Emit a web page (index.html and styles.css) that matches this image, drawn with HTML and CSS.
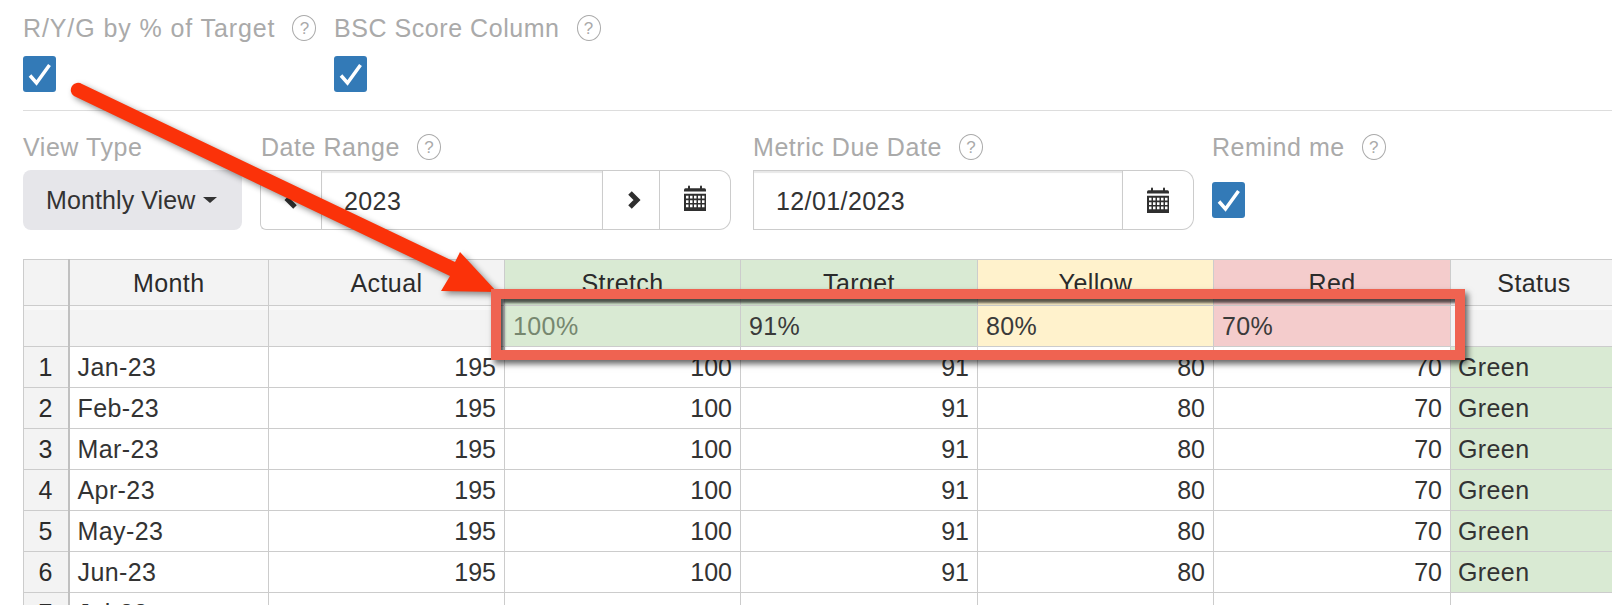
FILE: index.html
```html
<!DOCTYPE html>
<html lang="en">
<head>
<meta charset="utf-8">
<title>Metric settings</title>
<link rel="stylesheet" href="styles.css">
</head>
<body>
<svg class="defs" width="0" height="0" aria-hidden="true">
  <symbol id="cal" viewBox="0 2 22 24" preserveAspectRatio="none">
    <path d="M0 8V6.500Q0 5 1.500 5H4V3.500Q4 2.500 5 2.500T6 3.500V5H16V3.500Q16 2.500 17 2.500T18 3.500V5H20.500Q22 5 22 6.500V8Z" fill="#2f2f2f"/>
    <path fill-rule="evenodd" fill="#2f2f2f" d="M0 10H22V26H0ZM2 12V14.500H4.500V12ZM6 12V14.500H8.500V12ZM10 12V14.500H12.500V12ZM14 12V14.500H16.500V12ZM18 12V14.500H20.500V12ZM2 16V18.500H4.500V16ZM6 16V18.500H8.500V16ZM10 16V18.500H12.500V16ZM14 16V18.500H16.500V16ZM18 16V18.500H20.500V16ZM2 20V22.500H4.500V20ZM6 20V22.500H8.500V20ZM10 20V22.500H12.500V20ZM14 20V22.500H16.500V20ZM18 20V22.500H20.500V20Z"/>
  </symbol>
  <symbol id="tick" viewBox="0 0 33 36">
    <path d="M7 19.500L13.500 27L26.500 9" fill="none" stroke="#fff" stroke-width="3.500"/>
  </symbol>
</svg>

<div class="page">
  <div class="settings">
    <div class="field f-ryg">
      <div class="label">R/Y/G by % of Target <span class="help">?</span></div>
      <span class="check"><svg class="tick"><use href="#tick"/></svg></span>
    </div>
    <div class="field">
      <div class="label">BSC Score Column <span class="help">?</span></div>
      <span class="check"><svg class="tick"><use href="#tick"/></svg></span>
    </div>
  </div>

  <hr class="rule">

  <div class="controls">
    <div class="field f-view">
      <div class="label">View Type</div>
      <button class="dropdown">Monthly View <span class="caret"></span></button>
    </div>
    <div class="field f-range">
      <div class="label">Date Range <span class="help">?</span></div>
      <div class="group">
        <span class="addon a-prev"><svg class="chev" viewBox="0 0 14 18"><path d="M11 2L4 9L11 16" fill="none" stroke="#2f2f2f" stroke-width="5"/></svg></span>
        <span class="input i-year">2023</span>
        <span class="addon a-next"><svg class="chev" viewBox="0 0 14 18"><path d="M3 2L10 9L3 16" fill="none" stroke="#2f2f2f" stroke-width="5"/></svg></span>
        <span class="addon a-cal a-cal-high"><svg class="cal"><use href="#cal"/></svg></span>
      </div>
    </div>
    <div class="field f-due">
      <div class="label">Metric Due Date <span class="help">?</span></div>
      <div class="group">
        <span class="input i-date">12/01/2023</span>
        <span class="addon a-cal"><svg class="cal"><use href="#cal"/></svg></span>
      </div>
    </div>
    <div class="field">
      <div class="label">Remind me <span class="help">?</span></div>
      <div class="remind"><span class="check"><svg class="tick"><use href="#tick"/></svg></span></div>
    </div>
  </div>

  <div class="sheet">
    <table>
      <colgroup>
        <col class="c-idx"><col class="c-month"><col class="c-actual"><col class="c-stretch"><col class="c-target"><col class="c-yellow"><col class="c-red"><col class="c-status">
      </colgroup>
      <thead>
        <tr class="head">
          <th class="idx"></th><th>Month</th><th>Actual</th><th class="green">Stretch</th><th class="green">Target</th><th class="yellow">Yellow</th><th class="red">Red</th><th>Status</th>
        </tr>
        <tr class="pct">
          <th class="idx"></th><th></th><th></th><th class="green muted">100%</th><th class="green">91%</th><th class="yellow">80%</th><th class="red">70%</th><th></th>
        </tr>
      </thead>
      <tbody>
        <tr><th class="idx">1</th><td>Jan-23</td><td class="num">195</td><td class="num">100</td><td class="num">91</td><td class="num">80</td><td class="num">70</td><td class="green">Green</td></tr>
        <tr><th class="idx">2</th><td>Feb-23</td><td class="num">195</td><td class="num">100</td><td class="num">91</td><td class="num">80</td><td class="num">70</td><td class="green">Green</td></tr>
        <tr><th class="idx">3</th><td>Mar-23</td><td class="num">195</td><td class="num">100</td><td class="num">91</td><td class="num">80</td><td class="num">70</td><td class="green">Green</td></tr>
        <tr><th class="idx">4</th><td>Apr-23</td><td class="num">195</td><td class="num">100</td><td class="num">91</td><td class="num">80</td><td class="num">70</td><td class="green">Green</td></tr>
        <tr><th class="idx">5</th><td>May-23</td><td class="num">195</td><td class="num">100</td><td class="num">91</td><td class="num">80</td><td class="num">70</td><td class="green">Green</td></tr>
        <tr><th class="idx">6</th><td>Jun-23</td><td class="num">195</td><td class="num">100</td><td class="num">91</td><td class="num">80</td><td class="num">70</td><td class="green">Green</td></tr>
        <tr><th class="idx">7</th><td>Jul-23</td><td></td><td></td><td></td><td></td><td></td><td></td></tr>
      </tbody>
    </table>
  </div>

  <svg class="arrow" viewBox="0 0 1612 606" aria-hidden="true">
    <path d="M82 84L455 262L460 252L497 292L441 291L450 276L74 96A7 7 0 0 1 82 84Z"/>
  </svg>
  <div class="callout"></div>
</div>
</body>
</html>
```

FILE: styles.css
```css
* { box-sizing: border-box; }

html, body {
  margin: 0;
  background: #fff;
}

body {
  font-family: "Liberation Sans", Arial, sans-serif;
  font-size: 25px;
  letter-spacing: 0.4px;
  color: #333;
  overflow: hidden;
}

.defs { position: absolute; }

.page {
  position: relative;
  width: 1612px;
  height: 606px;
  padding: 14px 0 0 23px;
  overflow: hidden;
}

.settings, .controls { display: flex; }

.field { flex: none; }
.f-ryg { width: 311px; }
.f-view { width: 237px; }
.f-range { width: 493px; }
.f-due { width: 459px; }

.label {
  height: 30px;
  padding-bottom: 2px;
  line-height: 28px;
  color: #aaa;
  letter-spacing: 0.55px;
  white-space: nowrap;
  display: flex;
  align-items: center;
}

.f-ryg .label { letter-spacing: 0.9px; }
.f-range .label { padding-left: 1px; }

.help {
  width: 24px;
  height: 26px;
  margin-left: 17px;
  border: 1.5px solid #aaa;
  border-radius: 50%;
  font-size: 17px;
  letter-spacing: 0;
  line-height: 1;
  display: inline-flex;
  align-items: center;
  justify-content: center;
}

.check {
  display: block;
  width: 33px;
  height: 36px;
  margin-top: 12px;
  background: #337ab7;
  border-radius: 3px;
}

.tick {
  display: block;
  width: 33px;
  height: 36px;
}

.remind { padding-top: 7px; }

.rule {
  height: 1px;
  margin: 18px 0 0;
  border: 0;
  background: #ddd;
}

.controls { margin-top: 22px; }

.dropdown {
  display: flex;
  align-items: center;
  width: 219px;
  height: 60px;
  margin-top: 7px;
  padding: 0 0 0 23px;
  border: 0;
  border-radius: 8px;
  background: #e6e6ea;
  font: inherit;
  letter-spacing: 0.1px;
  color: #333;
}

.caret {
  width: 0;
  height: 0;
  margin-left: 8px;
  border-style: solid;
  border-width: 6px 7px 0;
  border-color: #333 transparent transparent;
}

.group {
  display: flex;
  height: 60px;
  margin-top: 7px;
}

.addon, .input {
  display: flex;
  align-items: center;
  border: 1px solid #ccc;
  background: #fff;
}

.addon { justify-content: center; }
.input {
  padding: 2px 0 0 22px;
  box-shadow: inset 0 2px 1px #e8e8e8;
}

.a-prev { width: 61px; border-radius: 6px 0 0 6px; border-right: 0; }
.i-year { width: 282px; }
.a-next { width: 57px; border-left: 0; padding-left: 6px; }
.a-cal { width: 71px; border-left: 0; border-radius: 0 12px 12px 0; }
.a-cal-high { padding-bottom: 4px; }
.i-date { width: 370px; }
.a-next { border-right: 1px solid #ccc; }

.chev { width: 14px; height: 18px; display: block; }
.cal { width: 22px; height: 26px; display: block; }

.sheet {
  width: 1589px;
  height: 346px;
  margin-top: 29px;
  overflow: hidden;
}

table {
  width: 1594px;
  table-layout: fixed;
  border-collapse: collapse;
}

.c-idx { width: 45px; }
.c-month { width: 200px; }
.c-actual { width: 236px; }
.c-stretch { width: 236px; }
.c-target { width: 237px; }
.c-yellow { width: 236px; }
.c-red { width: 237px; }
.c-status { width: 167px; }

th, td {
  padding: 1px 8px 0;
  border: 1px solid #ccc;
  font-weight: 400;
  overflow: hidden;
  white-space: nowrap;
}

th { background: #f3f3f3; color: #2b2b2b; }

tr { height: 41px; }
.head { height: 46px; }
.head th { padding-top: 2px; text-align: center; }
.pct { height: 41px; }
.pct th { padding-top: 0; text-align: left; color: #3a3a3a; box-shadow: inset 0 4px 0 #f8f8f8; }

.idx {
  padding-left: 0;
  padding-right: 0;
  text-align: center;
  border-right: 2px solid #c0c0c0;
}

.num { text-align: right; letter-spacing: 0; }

td.green { padding-left: 7px; background: #d9ead3; }
.pct .green, .head .green { background: #d9ead3; box-shadow: none; }
.pct .yellow, .head .yellow { background: #fff2cc; box-shadow: none; }
.pct .red, .head .red { background: #f4cccc; box-shadow: none; }
.pct .muted { color: #76876f; }

.arrow {
  position: absolute;
  left: 0;
  top: 0;
  width: 1612px;
  height: 606px;
  filter: drop-shadow(3px 3px 3px rgba(0, 0, 0, 0.45));
}

.arrow path { fill: #fb3209; }

.callout {
  position: absolute;
  left: 491px;
  top: 289px;
  width: 974px;
  height: 71px;
  border: 10px solid #ef6351;
  box-shadow: 3px 4px 6px rgba(0, 0, 0, 0.6), inset 3px 4px 3px rgba(0, 0, 0, 0.65);
}
```
